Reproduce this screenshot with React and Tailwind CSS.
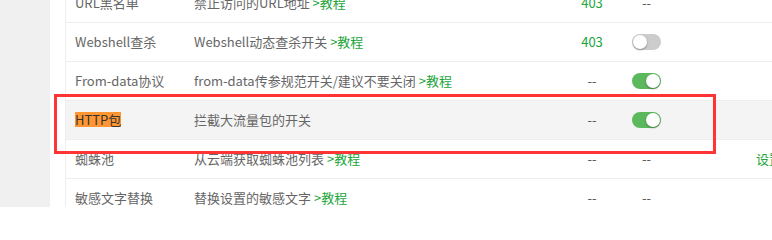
const GREEN = '#20a53a';

const rows = [
  { name: 'URL黑名单', desc: '禁止访问的URL地址', link: true, code: '403', status: 'dash' },
  { name: 'Webshell查杀', desc: 'Webshell动态查杀开关', link: true, code: '403', status: 'off' },
  { name: 'From-data协议', desc: 'from-data传参规范开关/建议不要关闭', link: true, code: '--', status: 'on' },
  { name: 'HTTP包', desc: '拦截大流量包的开关', link: false, code: '--', status: 'on', active: true },
  { name: '蜘蛛池', desc: '从云端获取蜘蛛池列表', link: true, code: '--', status: 'dash', action: '设置' },
  { name: '敏感文字替换', desc: '替换设置的敏感文字', link: true, code: '--', status: 'dash' },
];

// iOS style switch used in the BT panel
function Switch({ on }) {
  return (
    <span
      className={`relative inline-block h-[16px] w-[29px] rounded-full ${on ? 'bg-[#5cb85c]' : 'bg-[#cccccc]'}`}
    >
      <span
        className={`absolute top-[1px] h-[14px] w-[14px] rounded-full bg-white shadow-[0_1px_2px_rgba(0,0,0,0.35)] ${on ? 'right-[1px]' : 'left-[1px]'}`}
      />
    </span>
  );
}

export default function App() {
  return (
    <div
      className="relative flex h-[207px] w-[772px] overflow-hidden bg-[#f0f0f0] text-[13px] text-[#666]"
      style={{ fontFamily: '"Noto Sans CJK SC", "Microsoft YaHei", sans-serif' }}
    >
      <div className="ml-[50px] flex-1 bg-white pl-[15px]">
        <div className="-mt-[16px] h-[260px] border-l border-[#eeeeee]">
          {rows.map((r) => (
            <div
              key={r.name}
              className={`flex h-[39px] items-center border-b border-[#eeeeee] ${r.active ? 'bg-[#f4f4f4]' : ''}`}
            >
              <div className="w-[119px] shrink-0 pl-[9px]">
                {r.active ? (
                  <span className="inline-block bg-[#ff9632] leading-[15px] text-[#333]">{r.name}</span>
                ) : (
                  r.name
                )}
              </div>
              <div className="w-[376px] shrink-0 whitespace-nowrap pl-[9px]">
                {r.desc}
                {r.link && <span style={{ color: GREEN }}> &gt;教程</span>}
              </div>
              <div className={`w-[62px] shrink-0 text-center ${r.code === '403' ? 'text-[#20a53a]' : 'text-[#555]'}`}>
                {r.code}
              </div>
              <div className="flex w-[47px] shrink-0 justify-center text-[#555]">
                {r.status === 'dash' ? '--' : <Switch on={r.status === 'on'} />}
              </div>
              <div className="flex-1 whitespace-nowrap pl-[86px] text-[#20a53a]">{r.action}</div>
            </div>
          ))}
        </div>
      </div>
      {/* annotation frame drawn over the table */}
      <div className="pointer-events-none absolute left-[54px] top-[94px] h-[60px] w-[662px] border-[3px] border-[#ff3434]" />
    </div>
  );
}
